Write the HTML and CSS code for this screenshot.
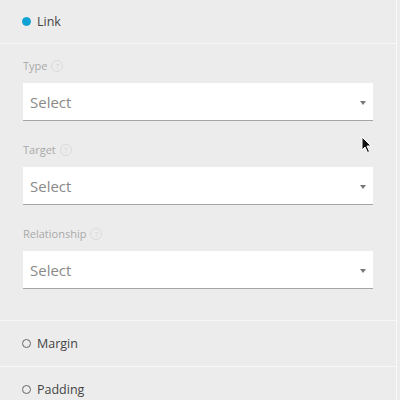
FILE: index.html
```html
<!DOCTYPE html>
<html>
<head>
<meta charset="utf-8">
<link rel="stylesheet" href="styles.css">
</head>
<body>
<div class="panel">
  <div class="row">
    <span class="dot dot-on"></span><span class="row-title">Link</span>
  </div>
  <div class="fields">
    <div class="field">
      <div class="label">Type <span class="help">?</span></div>
      <div class="select"><span>Select</span><span class="caret"></span></div>
    </div>
    <div class="field">
      <div class="label">Target <span class="help">?</span></div>
      <div class="select"><span>Select</span><span class="caret"></span></div>
    </div>
    <div class="field">
      <div class="label">Relationship <span class="help">?</span></div>
      <div class="select"><span>Select</span><span class="caret"></span></div>
    </div>
  </div>
  <div class="row">
    <span class="dot"></span><span class="row-title">Margin</span>
  </div>
  <div class="row">
    <span class="dot"></span><span class="row-title">Padding</span>
  </div>
  <svg class="cursor" width="12" height="18" viewBox="0 0 12 18"><path d="M1 1 L1 14 L4 11 L6.5 16.5 L8.5 15.5 L6 10 L10 10 Z" fill="#111" stroke="#fff" stroke-width="1"/></svg>
</div>
</body>
</html>
```
FILE: styles.css
```css
html, body {
  margin: 0;
  padding: 0;
  background: #ececec;
}
body {
  font-family: "Open Sans", "DejaVu Sans", sans-serif;
  width: 400px;
  height: 400px;
  overflow: hidden;
}
.panel {
  position: relative;
  width: 396px;
  height: 400px;
  border-right: 1px solid #f8f8f8;
  background: #ececec;
}
.row {
  height: 43px;
  display: flex;
  align-items: center;
  padding-left: 22px;
  border-bottom: 1px solid #f7f7f7;
}
.row + .row {
  height: 45px;
}
.fields + .row {
  border-top: 1px solid #f7f7f7;
  height: 45px;
}
.dot {
  width: 7px;
  height: 7px;
  border-radius: 50%;
  border: 1.3px solid #666;
  box-sizing: content-box;
  margin-right: 6px;
}
.dot-on {
  background: #0ea2d4;
  border-color: #0ea2d4;
  margin-top: -1px;
}
.row-title {
  font-size: 12.5px;
  color: #444;
}
.fields {
  padding: 14px 23px 31px 23px;
  display: flex;
  flex-direction: column;
  gap: 21px;
}
.field {
  display: flex;
  flex-direction: column;
  gap: 9px;
}
.label {
  font-size: 11px;
  line-height: 16px;
  color: #a9a9a9;
  display: flex;
  align-items: center;
  gap: 4px;
}
.help {
  width: 10px;
  height: 10px;
  border: 1px solid #dadada;
  border-radius: 50%;
  font-size: 8px;
  line-height: 10px;
  text-align: center;
  color: #d4d4d4;
}
.select {
  height: 37px;
  background: #fff;
  border-bottom: 1px solid #a5a5a5;
  display: flex;
  align-items: center;
  justify-content: space-between;
  padding: 0 7px 0 7px;
  font-size: 15px;
  color: #8a8a8a;
}
.caret {
  width: 0;
  height: 0;
  border-left: 3.5px solid transparent;
  border-right: 3.5px solid transparent;
  border-top: 4px solid #777;
  margin-top: 2px;
}
.cursor {
  position: absolute;
  left: 361px;
  top: 136px;
}
```
